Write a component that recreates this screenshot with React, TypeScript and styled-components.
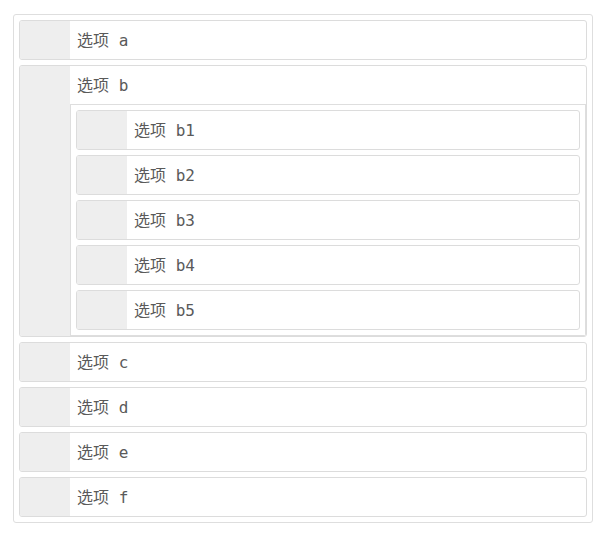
import React from "react";
import styled, { createGlobalStyle } from "styled-components";

const GlobalStyle = createGlobalStyle`
  body {
    margin: 0;
    background: #fff;
    font-family: "DejaVu Sans Mono", "Noto Sans CJK SC", monospace;
  }
`;

const Page = styled.div`
  padding: 14px 13px;
`;

const List = styled.div<{ $nested?: boolean }>`
  display: flex;
  flex-direction: column;
  gap: 5px;
  padding: 5px;
  border: 1px solid #dedede;
  border-radius: ${(p) => (p.$nested ? "0" : "3px")};
  background: #fff;
`;

const Item = styled.div`
  display: flex;
  border: 1px solid #dcdcdc;
  border-radius: 3px;
  overflow: hidden;
  background: #fff;
`;

const Handle = styled.div`
  flex: 0 0 50px;
  background: #eeeeee;
`;

const Body = styled.div`
  flex: 1;
  display: flex;
  flex-direction: column;
  min-width: 0;
`;

const Label = styled.div`
  height: 38px;
  box-sizing: border-box;
  display: flex;
  align-items: center;
  padding: 0 0 3px 7px;
  font-size: 16px;
  color: #5a5a5a;
  white-space: pre;
`;

type Node = { name: string; children?: Node[] };

const data: Node[] = [
  { name: "a" },
  {
    name: "b",
    children: [
      { name: "b1" },
      { name: "b2" },
      { name: "b3" },
      { name: "b4" },
      { name: "b5" },
    ],
  },
  { name: "c" },
  { name: "d" },
  { name: "e" },
  { name: "f" },
];

function Entry({ node }: { node: Node }) {
  return (
    <Item>
      <Handle />
      <Body>
        <Label>{`选项 ${node.name}`}</Label>
        {node.children && (
          <List $nested>
            {node.children.map((c) => (
              <Entry key={c.name} node={c} />
            ))}
          </List>
        )}
      </Body>
    </Item>
  );
}

export default function App() {
  return (
    <>
      <GlobalStyle />
      <Page>
        <List>
          {data.map((n) => (
            <Entry key={n.name} node={n} />
          ))}
        </List>
      </Page>
    </>
  );
}
